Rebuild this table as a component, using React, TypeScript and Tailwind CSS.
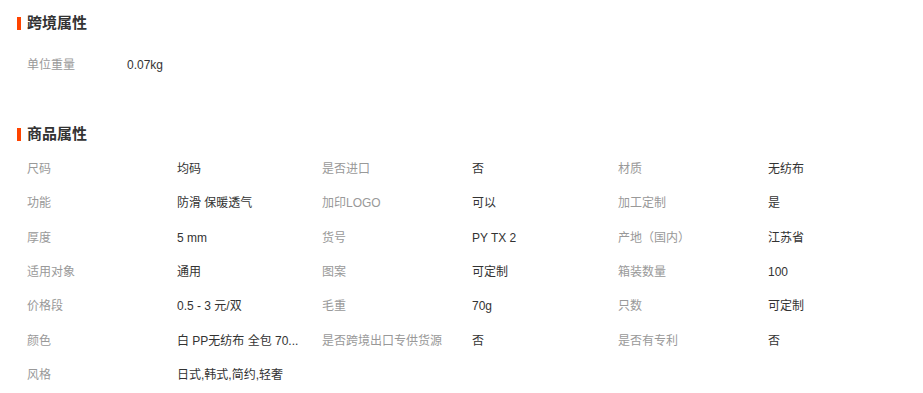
const font = { fontFamily: '"Liberation Sans", "Noto Sans CJK SC", sans-serif' }

const crossBorder = [['单位重量', '0.07kg']]

const attrs: [string, string][] = [
  ['尺码', '均码'],
  ['是否进口', '否'],
  ['材质', '无纺布'],
  ['功能', '防滑 保暖透气'],
  ['加印LOGO', '可以'],
  ['加工定制', '是'],
  ['厚度', '5 mm'],
  ['货号', 'PY TX 2'],
  ['产地（国内）', '江苏省'],
  ['适用对象', '通用'],
  ['图案', '可定制'],
  ['箱装数量', '100'],
  ['价格段', '0.5 - 3 元/双'],
  ['毛重', '70g'],
  ['只数', '可定制'],
  ['颜色', '白 PP无纺布 全包 70...'],
  ['是否跨境出口专供货源', '否'],
  ['是否有专利', '否'],
  ['风格', '日式,韩式,简约,轻奢'],
]

function Heading({ title }: { title: string }) {
  return (
    <div className="flex items-center h-[20px]">
      <div className="w-[4px] h-[13px] bg-[#ff4400]" />
      <h3 className="ml-[6px] text-[15px] font-bold text-[#333]">{title}</h3>
    </div>
  )
}

export default function App() {
  return (
    <div className="w-[923px] h-[393px] bg-white pl-[17px] pt-[13px] overflow-hidden" style={font}>
      <Heading title="跨境属性" />
      <div className="mt-[15px] pl-[10px]">
        {crossBorder.map(([k, v]) => (
          <div key={k} className="flex items-center h-[34px] text-[12px]">
            <span className="w-[100px] text-[#999]">{k}</span>
            <span className="text-[#333]">{v}</span>
          </div>
        ))}
      </div>

      <div className="mt-[42px]">
        <Heading title="商品属性" />
      </div>
      <div className="mt-[8px] pl-[10px] grid grid-cols-[150px_145px_150px_146px_150px_145px] auto-rows-[34.3px] text-[12px]">
        {attrs.map(([k, v]) => (
          <div key={k} className="contents">
            <div className="flex items-center text-[#999] whitespace-nowrap">{k}</div>
            <div className="flex items-center text-[#333] whitespace-nowrap">{v}</div>
          </div>
        ))}
      </div>
    </div>
  )
}
